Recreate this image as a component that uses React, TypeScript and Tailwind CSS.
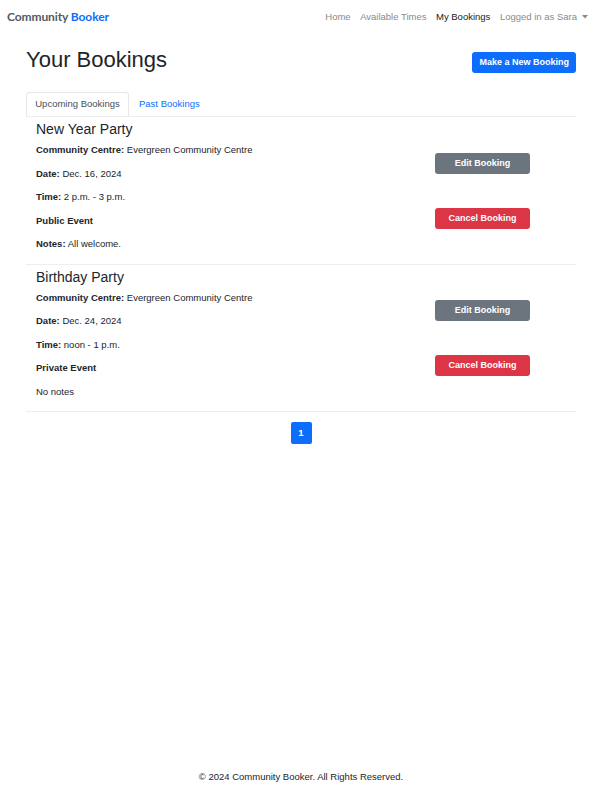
import React from 'react';

const bookings = [
  {
    title: 'New Year Party',
    centre: 'Evergreen Community Centre',
    date: 'Dec. 16, 2024',
    time: '2 p.m. - 3 p.m.',
    kind: 'Public Event',
    notes: 'All welcome.',
  },
  {
    title: 'Birthday Party',
    centre: 'Evergreen Community Centre',
    date: 'Dec. 24, 2024',
    time: 'noon - 1 p.m.',
    kind: 'Private Event',
    notes: '',
  },
];

const App: React.FC = () => {
  return (
    <div className="min-h-[803px] flex flex-col bg-white text-[#212529] font-['Liberation_Sans',Arial,sans-serif]">
      {/* Navbar */}
      <nav className="h-[34px] flex items-center justify-between pl-[7px] pr-[14px]">
        <div className="font-['Lato',sans-serif] font-bold text-[12px] tracking-[-0.1px]">
          <span className="text-[#4f5b66]">Community</span> <span className="text-[#0d6efd]">Booker</span>
        </div>
        <div className="flex items-center gap-[9.5px] text-[9.5px] text-[#8a8a8a]">
          <span>Home</span>
          <span>Available Times</span>
          <span className="text-[#1a1a1a]">My Bookings</span>
          <span className="flex items-center">
            Logged in as Sara
            <svg className="ml-[5px]" width="6" height="4" viewBox="0 0 6 4">
              <path d="M0 0 L6 0 L3 3.5 Z" fill="#8a8a8a" />
            </svg>
          </span>
        </div>
      </nav>

      {/* Main */}
      <main className="flex-1 px-[26px]">
        <div className="flex items-start justify-between mt-[13px]">
          <h1 className="text-[22px] leading-[26px]">Your Bookings</h1>
          <button className="mt-[5px] h-[21px] px-[7px] rounded-[3px] bg-[#0d6efd] text-white text-[9px] font-bold">
            Make a New Booking
          </button>
        </div>

        {/* Tabs */}
        <div className="mt-[19px] flex border-b border-[#eceef0] text-[9.5px]">
          <div className="h-[24px] w-[103px] flex items-center justify-center border border-b-0 border-[#e6e8ea] rounded-t-[3px] bg-white -mb-px text-[#495057]">
            Upcoming Bookings
          </div>
          <div className="h-[24px] px-[10px] flex items-center text-[#0d6efd]">Past Bookings</div>
        </div>

        {/* Bookings */}
        {bookings.map((b) => (
          <div key={b.title} className="grid grid-cols-3 border-b border-[#eceef0] pt-[4px] pb-[3px] pl-[10px]">
            <div className="col-span-2">
              <h2 className="text-[14px] leading-[17px] mb-[5px]">{b.title}</h2>
              <p className="text-[9.5px] leading-[14px] mb-[9.5px]">
                <span className="font-bold">Community Centre:</span> {b.centre}
              </p>
              <p className="text-[9.5px] leading-[14px] mb-[9.5px]">
                <span className="font-bold">Date:</span> {b.date}
              </p>
              <p className="text-[9.5px] leading-[14px] mb-[9.5px]">
                <span className="font-bold">Time:</span> {b.time}
              </p>
              <p className="text-[9.5px] leading-[14px] mb-[9.5px] font-bold">{b.kind}</p>
              <p className="text-[9.5px] leading-[14px] mb-[9.5px]">
                {b.notes ? (
                  <>
                    <span className="font-bold">Notes:</span> {b.notes}
                  </>
                ) : (
                  'No notes'
                )}
              </p>
            </div>
            <div className="flex flex-col items-center justify-center gap-[34px] pr-[7px]">
              <button className="w-[95px] h-[21px] rounded-[3px] bg-[#6c757d] text-white text-[9px] font-bold">
                Edit Booking
              </button>
              <button className="w-[95px] h-[21px] rounded-[3px] bg-[#dc3545] text-white text-[9px] font-bold">
                Cancel Booking
              </button>
            </div>
          </div>
        ))}

        {/* Pagination */}
        <div className="flex justify-center mt-[10px]">
          <span className="w-[21px] h-[22px] flex items-center justify-center rounded-[2px] bg-[#0d6efd] text-white text-[9.5px] font-bold">
            1
          </span>
        </div>
      </main>

      {/* Footer */}
      <footer className="pb-[20px] text-center text-[9.5px] leading-[12px]">
        © 2024 Community Booker. All Rights Reserved.
      </footer>
    </div>
  );
};

export default App;
